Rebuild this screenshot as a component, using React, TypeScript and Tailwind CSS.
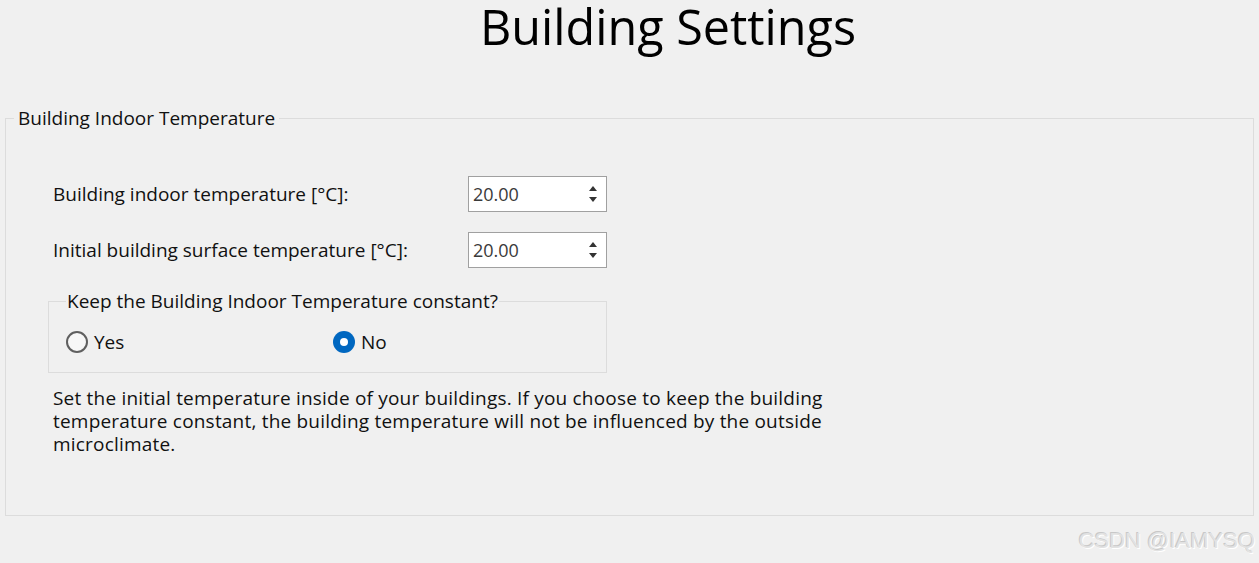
const font = "font-['Open_Sans','Noto_Sans',sans-serif]";

const Spin = ({ value }: { value: string }) => (
  <div className="flex h-[36px] w-[139px] items-center justify-between border border-[#a0a0a0] bg-white pl-[4px] pr-[8px]">
    <span className="text-[18px] text-[#3a3a3a]">{value}</span>
    <svg width="10" height="22" viewBox="0 0 10 22">
      <path d="M5 3 L9 8 L1 8 Z" fill="#333" />
      <path d="M1 14 L9 14 L5 19 Z" fill="#333" />
    </svg>
  </div>
);

const Radio = ({ label, checked }: { label: string; checked?: boolean }) => (
  <div className="flex items-center gap-[6px]">
    {checked ? (
      <div className="flex h-[22px] w-[22px] items-center justify-center rounded-full bg-[#0067c0]">
        <div className="h-[8px] w-[8px] rounded-full bg-white" />
      </div>
    ) : (
      <div className="h-[22px] w-[22px] rounded-full border-2 border-[#5f5f5f] bg-[#f7f7f7]" />
    )}
    <span>{label}</span>
  </div>
);

export default function App() {
  return (
    <div className={`h-[563px] w-[1259px] overflow-hidden bg-[#f0f0f0] text-[19px] text-[#111] ${font}`}>
      <h1 className="h-[108px] pl-[77px] text-center text-[48.5px] leading-[52px] text-black">
        Building Settings
      </h1>
      <fieldset className="mx-[5px] h-[408px] border border-[#dcdcdc] p-0">
        <legend className="ml-[8px] px-[4px] leading-[20px]">Building Indoor Temperature</legend>
        <div className="pl-[47px]">
          <div className="mt-[48px] flex flex-col gap-[20px]">
            <div className="flex items-center">
              <span className="w-[415px]">Building indoor temperature [°C]:</span>
              <Spin value="20.00" />
            </div>
            <div className="flex items-center">
              <span className="w-[415px]">Initial building surface temperature [°C]:</span>
              <Spin value="20.00" />
            </div>
          </div>
          <fieldset className="mt-[23px] ml-[-5px] h-[82px] w-[559px] border border-[#dcdcdc] px-[17px] pt-0">
            <legend className="px-[1px] leading-[20px]">Keep the Building Indoor Temperature constant?</legend>
            <div className="mt-[17px] flex">
              <div className="w-[267px]">
                <Radio label="Yes" />
              </div>
              <Radio label="No" checked />
            </div>
          </fieldset>
          <p className="mt-[14px] w-[790px] leading-[23px] tracking-[0.2px]">
            Set the initial temperature inside of your buildings. If you choose to keep the building
            temperature constant, the building temperature will not be influenced by the outside
            microclimate.
          </p>
        </div>
      </fieldset>
      <div className="mt-[8px] pr-[4px] text-right font-['Liberation_Sans',sans-serif] text-[22px] text-[#e2e2e2] [text-shadow:-1px_-1px_0_#c8c8c8,1px_1px_0_#ffffff]">
        CSDN @IAMYSQ
      </div>
    </div>
  );
}
